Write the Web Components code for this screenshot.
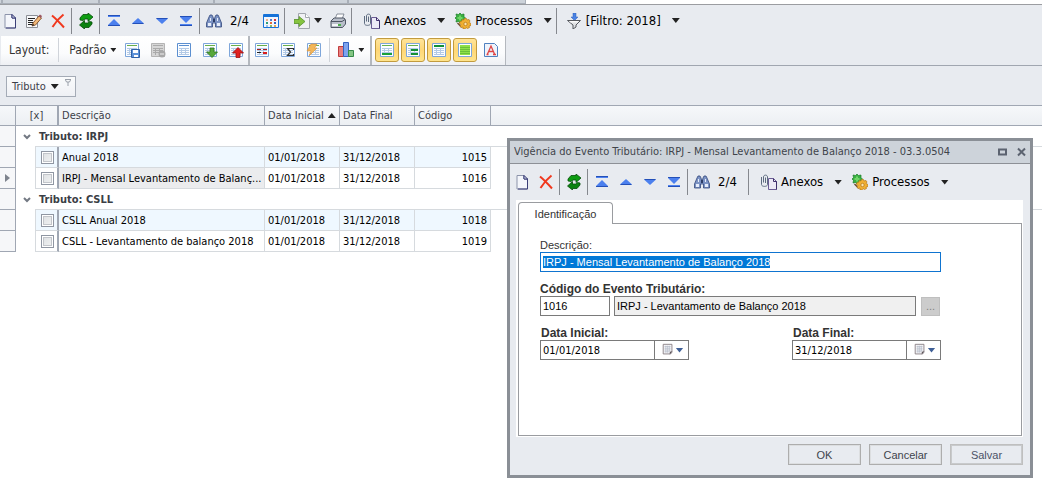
<!DOCTYPE html>
<html lang="pt-BR">
<head>
<meta charset="utf-8">
<title>Vigência do Evento Tributário</title>
<style>
  body {
    margin: 0;
    background: #fff;
    color: #1c1c1c;
    font: 11px/14px "DejaVu Sans Condensed", Tahoma, sans-serif;
  }
</style>
</head>
<body>
<event-page></event-page>

<script>
const ICONS = {
  new: `<path d="M3 1.500h7l3.500 3.500v10H3z" fill="#f4f6fb" stroke="#8c93aa"/><path d="M10 1.500v3.500h3.500v10H4" fill="none" stroke="#3b3f78"/><path d="M10 1.500l3.500 3.500H10z" fill="#dfe4f2" stroke="#3b3f78"/>`,
  edit: `<path d="M.5 2.500h11v12H.5z" fill="#f7f8fa" stroke="#8c8f96"/><path d="M2 5.500h7M2 7.500h5M2 9.500h5M2 11.500h4" stroke="#222"/><path d="M6 13l1-3 6-7 2.500 2-6 7z" fill="#f2b878" stroke="#8a5a34"/><path d="M6 13l.8-2.200 1.500 1.300z" fill="#222"/><path d="M12.500 3l1.500-1.500 2 1.500-1 2z" fill="#9a5560"/>`,
  remove: `<path d="M2 2.500C5 5 10 10 14 14.500M13.500 1.500C9 5 5 10 2.500 14" fill="none" stroke="#f0381e" stroke-width="2"/>`,
  refresh: `<path d="M2 7V5l3-3.500h5V0l5 4-5 4.500V6H7L5 7.500z" fill="#0d9c12" stroke="#064e0a" stroke-width=".8"/><path d="M14 9v2l-3 3.500H6.500V16L1.500 12l5-4.500V10H9.500l2-1.500z" fill="#0b8210" stroke="#064e0a" stroke-width=".8"/>`,
  first: `<path d="M2 2h12v2H2z" fill="#4f83f0"/><path d="M2 2h12v1H2z" fill="#2450b8"/><path d="M8 6l6 6v1H2v-1z" fill="#4c80ee"/><path d="M2 12h12v1H2z" fill="#2450b8"/>`,
  up: `<path d="M8 5l5.500 5v1h-11v-1z" fill="#4c80ee"/><path d="M2.500 10h11v1h-11z" fill="#2450b8"/>`,
  down: `<path d="M8 11L2.500 6V5h11v1z" fill="#4c80ee"/><path d="M2.500 5h11v1h-11z" fill="#2450b8"/>`,
  last: `<path d="M8 10L2 4V3h12v1z" fill="#4c80ee"/><path d="M2 3h12v1H2z" fill="#2450b8"/><path d="M2 11h12v2H2z" fill="#4f83f0"/><path d="M2 12h12v1H2z" fill="#2450b8"/>`,
  find: `<path d="M3 4l1-2h2l1 2 .5 2h1L9 4l1-2h2l1 2 2.500 6v4h-6v-4h-3v4h-6v-4z" fill="#7c93c4" stroke="#32477c" stroke-width=".8"/><path d="M2 10h3v3H2zM11 10h3v3h-3zM4 5h1v3H4zM11 5h1v3h-1z" fill="#e6edfb"/><path d="M7 6h2v3H7z" fill="#2c3c66"/>`,
  calendar: `<path d="M.5 1.500h15v13H.5z" fill="#f3f6fc" stroke="#1672d8"/><path d="M1 1h14v3H1z" fill="#1672d8"/><path d="M3 6h2v2H3z" fill="#efb08a"/><path d="M7 6h2v2H7z" fill="#4b7ed0"/><path d="M11 6h2v2h-2z" fill="#d8363c"/><path d="M3 9h2v2H3z" fill="#2f9e78"/><path d="M7 9h2v2H7z" fill="#e66a32"/><path d="M11 9h2v2h-2z" fill="#3264c0"/><path d="M3 12h2v2H3z" fill="#9bc0e8"/><path d="M7 12h2v2H7z" fill="#85b96c"/><path d="M11 12h2v2h-2z" fill="#e8a44c"/>`,
  export: `<path d="M4.500.500h7l4 4v11h-11z" fill="#f0f1f4" stroke="#a2a6ae"/><path d="M11.500.500v4h4" fill="#fff" stroke="#a2a6ae"/><path d="M0 6.500h5v-3L11 8.500 5 13.500v-3H0z" fill="#86c440" stroke="#55912a" stroke-width=".8"/>`,
  print: `<path d="M5 6l2-5h7l-2 5z" fill="#fdfdfe" stroke="#6f7684" stroke-width=".8"/><path d="M1 8l3-3h10l1.500 2v4l-3 3.500H1z" fill="#b9bfca" stroke="#4f5664"/><path d="M1 8.500h11l3-2" fill="none" stroke="#4f5664"/><path d="M2 11h9v2H2z" fill="#f4f6f8"/><path d="M8 11h3v2H8z" fill="#4cae4c"/>`,
  clip: `<path d="M7.500 4.500h5l3 3v8h-8z" fill="#eceaf6" stroke="#6b5d94"/><path d="M12.500 4.500v3h3v8" fill="none" stroke="#3e2f6c"/><path d="M4.500 3.500V9M2.500 8.500V3c0-2.500 4-2.500 4 0v7.500c0 2.500-6 2.500-6 0V3" fill="none" stroke="#5e6c80"/>`,
  gears: `<path d="M5 0l1.500 1.500L9 1v2.500L10.500 5 9 6.500V9L6.500 8.500 5 10 3.500 8.500 1 9l.5-2.500L0 5l1.500-1.500L1 1l2.500.500z" fill="#38b040" stroke="#1c7c2a" stroke-width=".7"/><path d="M4 2.500h2V4h1.500v2H6v1.500H4V6H2.500V4H4z" fill="#70d468"/><path d="M2.500 10l4 4" stroke="#6b4a30" stroke-width="1.500"/><path d="M9.500 5.500h2l.5 1.500 2-.5 1 1.500-1 1.500 2 1v2l-2 .5.5 1.500-2 1-1.500-1-1 1.500h-2L8 14l-2 .5L5 13l1-1.500-1.500-1 .5-2 2-.5V6.500l2 .500z" fill="#f0b032" stroke="#b87818" stroke-width=".7"/><circle cx="10.500" cy="11" r="1.700" fill="#fbe6b0" stroke="#b87818" stroke-width=".8"/>`,
  filter: `<path d="M7 0h3v4h2L8.500 7.500 5 4h2z" fill="#4a82e4" stroke="#2d5cb8" stroke-width=".5"/><path d="M1.500 7.500h13L10 12v2l-3 2v-4z" fill="#dfe1e4" stroke="#55585e"/><path d="M3 8h10l-1.500 1.500h-7z" fill="#fafafa"/>`,
  pin: `<path d="M1 1.500h6M1.500 2l1 2h3l1-2M4 4v4" fill="none" stroke="#9aa0aa"/>`,
  note: `<path d="M2.500 1.500h10v9l-1.500 2H2.500z" fill="#f6f6f8" stroke="#857b80"/><path d="M4 4h7M4 6h7M4 8h7M4 10h5M5.500 3v8M7.500 3v8M9.500 3v7" fill="none" stroke="#b6bdca" stroke-width=".8"/><path d="M13 9.500l-3 3.500v-3z" fill="#5c5458"/>`
};

// small table sheet shared by the layout toolbar icons
const sheet = (extra, line = "#7ea6da", head = "#69b04c") =>
  `<path d="M1.500 1.500h13v13h-13z" fill="#fbfdff" stroke="${line}"/><path d="M3 3h10v1H3z" fill="${head}"/><path d="M3 6.500h10M3 8.500h10M3 10.500h10M3 12.500h10M5.500 6v7M9.500 6v7" stroke="#b3cae6" fill="none"/>${extra}`;

Object.assign(ICONS, {
  sheet: sheet("", "#5b8fd0", "#5b8fd0"),
  sheetSave: sheet(`<path d="M7.500 7.500h8v8h-8z" fill="#5d92d8" stroke="#2f62a8"/><path d="M9 8h5v3H9zM10 13h4v2h-4z" fill="#fff"/>`),
  sheetOff: `<path d="M1.500 1.500h13v13h-13z" fill="#d6d6d6" stroke="#b4b4b4"/><path d="M3 3.500h10M3 6.500h10M3 8.500h10M3 10.500h10M5.500 6v7M9.500 6v7" stroke="#aaa" fill="none"/><circle cx="12" cy="12" r="3.500" fill="#a8a8a8"/><path d="M10 12h4" stroke="#eee"/>`,
  sheetDown: sheet(`<path d="M8 6h4v4h3.500L10 15.500 4.500 10H8z" fill="#58a83a" stroke="#2f7422" stroke-width=".8"/>`),
  sheetUp: sheet(`<path d="M8 15.500h4V11h3.500L10 5.500 4.500 11H8z" fill="#e02020" stroke="#9c1010" stroke-width=".8"/>`),
  sheetRows: sheet(`<path d="M3 7h4v1H3zM9 7h4v1H9z" fill="#a02020"/><path d="M3 10h4v1H3z" fill="#222"/><path d="M9 10h4v2H9z" fill="#d81e1e"/>`),
  sheetSum: sheet(`<path d="M13.500 8V6.500h-6L10.500 10l-3 3.500h6V12" fill="none" stroke="#303030" stroke-width="1.200"/>`),
  sheetBolt: sheet(`<path d="M5 2h6L8.500 6H11l-8 8 2-5H1z" fill="#f3b75a" stroke="#d8923a" stroke-width=".6"/>`),
  chart: `<path d="M.5 4.500h5v10h-5z" fill="#e88080" stroke="#c03c3c"/><path d="M5.500.500h5v14h-5z" fill="#7ea4ee" stroke="#3462c0"/><path d="M10.500 8.500h5v6h-5z" fill="#84c684" stroke="#348a48"/>`,
  sheetFoot: sheet(`<path d="M3 11h10v2H3z" fill="#18a03a"/>`),
  sheetGroup: sheet(`<path d="M6 7h7v2H6zM6 11h7v2H6z" fill="#129034"/>`),
  sheetHead: sheet(`<path d="M3 3h10v2H3z" fill="#129034"/>`),
  sheetFill: `<path d="M1.500 1.500h13v13h-13z" fill="#fff" stroke="#7ea6da"/><path d="M3 3h10v10H3z" fill="#90e048"/><path d="M3 5.500h10M3 7.500h10M3 9.500h10M3 11.500h10" stroke="#6cc03a"/>`,
  letter: `<path d="M1.500 1.500h10l3 3v10h-13z" fill="#eef3fb" stroke="#4f81c0"/><path d="M4.500 12L8 4l3.500 8M6 9.500h4M3.500 12.500h2M10 12.500h3" fill="none" stroke="#e04444" stroke-width="1.300"/>`
});

function define(name, css, html, setup) {
  const template = document.createElement("template");
  template.innerHTML = `<style>*{box-sizing:border-box}${css}</style>${html}`;
  customElements.define(name, class extends HTMLElement {
    constructor() {
      super();
      this.attachShadow({ mode: "open" }).append(template.content.cloneNode(true));
    }
    connectedCallback() {
      if (setup) setup(this, this.shadowRoot);
    }
  });
}

define("ui-icon", `
  :host { display: block; flex: none; width: 16px; height: 16px; }
  :host([small]) { width: 8px; height: 8px; }
  svg { display: block; width: 100%; height: 100%; }
`, `<svg aria-hidden="true"></svg>`, (host, root) => {
  const size = host.hasAttribute("small") ? 8 : 16;
  const svg = root.querySelector("svg");
  svg.setAttribute("viewBox", `0 0 ${size} ${size}`);
  svg.innerHTML = ICONS[host.getAttribute("name")] || "";
});

define("drop-arrow", `
  :host { display: block; flex: none; width: 8px; height: 5px; background: #222; clip-path: polygon(0 0, 100% 0, 50% 100%); }
  :host([tiny]) { width: 6px; height: 4px; }
`, ``);

define("tool-button", `
  :host { display: block; flex: none; }
  button {
    display: flex; align-items: center; justify-content: center; gap: 4px;
    min-width: 24px; height: 24px; padding: 0 4px; margin: 0;
    border: 0; border-radius: 3px; background: none; color: inherit; font: inherit; white-space: nowrap;
  }
  :host([pressed]) button { padding: 0 3px; border: 1px solid #c29b3e; background: linear-gradient(#ffe49a, #ffd776 50%, #ffe48c); }
`, `<button type="button"><ui-icon></ui-icon><slot></slot></button>`, (host, root) => {
  const icon = document.createElement("ui-icon");
  icon.setAttribute("name", host.getAttribute("icon"));
  root.querySelector("ui-icon").replaceWith(icon);
  root.querySelector("button").setAttribute("aria-label", host.textContent.trim() || host.getAttribute("label"));
  if (host.hasAttribute("pressed")) root.querySelector("button").setAttribute("aria-pressed", "true");
});

define("tool-separator", `
  :host { display: block; flex: none; width: 1px; height: 26px; margin: 0 2px 0 1px; background: #85888e; }
  :host([soft]) { height: 24px; background: #d0d4da; }
`, ``);

define("tab-strip", `
  :host { display: flex; height: 5px; border-bottom: 1px solid #9b9da1; background: #fff; }
  span { background: #cdd3da; border-right: 2px solid #a9afb8; border-bottom: 1px solid #a9afb8; }
  .lead { flex: 0 0 3px; } .a { flex: 0 0 97px; } .b { flex: 0 0 115px; } .c { flex: 0 0 134px; } .d { flex: 0 0 177px; border-right-width: 1px; }
`, `<span class="lead"></span><span class="a"></span><span class="b"></span><span class="c"></span><span class="d"></span>`);

define("record-toolbar", `
  :host { display: flex; align-items: center; height: 31px; margin-left: -2px; color: #000; font-size: 13px; }
  .count { width: 33px; padding-left: 4px; }
  .menu { display: flex; align-items: center; gap: 7px; padding: 0 3px; }
  .count ~ .export, .attach { margin-left: 3px; }
  :host([compact]) { margin-left: 0; }
  :host([compact]) .full { display: none; }
`, `
  <tool-button icon="new" label="Novo"></tool-button>
  <tool-button class="full" icon="edit" label="Editar"></tool-button>
  <tool-button icon="remove" label="Excluir"></tool-button>
  <tool-separator></tool-separator>
  <tool-button icon="refresh" label="Atualizar"></tool-button>
  <tool-separator></tool-separator>
  <tool-button icon="first" label="Primeiro"></tool-button>
  <tool-button icon="up" label="Anterior"></tool-button>
  <tool-button icon="down" label="Próximo"></tool-button>
  <tool-button icon="last" label="Último"></tool-button>
  <tool-separator></tool-separator>
  <tool-button icon="find" label="Localizar"></tool-button>
  <span class="count">2/4</span>
  <tool-button class="full" icon="calendar" label="Calendário"></tool-button>
  <tool-separator></tool-separator>
  <tool-button class="full export" icon="export" label="Exportar"><drop-arrow></drop-arrow></tool-button>
  <tool-button class="full" icon="print" label="Imprimir"></tool-button>
  <tool-separator class="full"></tool-separator>
  <div class="menu attach"><tool-button icon="clip">Anexos</tool-button><drop-arrow></drop-arrow></div>
  <div class="menu"><tool-button icon="gears">Processos</tool-button><drop-arrow></drop-arrow></div>
  <tool-separator class="full"></tool-separator>
  <div class="menu full"><tool-button icon="filter">[Filtro: 2018]</tool-button><drop-arrow></drop-arrow></div>
`);

define("layout-toolbar", `
  :host { display: flex; height: 30px; padding-left: 1px; border-bottom: 1px solid #a0a6b0; color: #333; }
  .band { display: flex; align-items: center; gap: 2px; height: 29px; padding: 0 0 1px; border-right: 2px solid #b4b8be; background: linear-gradient(#fff, #fbfcfd 60%, #eef0f4); }
  .band + .band { padding-right: 2px; }
  .band:last-child { padding-left: 3px; border-right-width: 1px; }
  label { padding: 0 6px 0 8px; font-size: 12px; }
  select { appearance: none; margin: 0; padding: 0; border: 0; background: none; color: inherit; font: inherit; font-size: 12px; }
  .pick { display: flex; align-items: center; gap: 3px; padding: 0 2px 0 6px; }
`, `
  <div class="band">
    <label for="layout">Layout:</label>
    <tool-separator soft></tool-separator>
    <div class="pick"><select id="layout"><option>Padrão</option></select><drop-arrow tiny></drop-arrow></div>
    <tool-button icon="sheetSave" label="Salvar layout"></tool-button>
    <tool-button icon="sheetOff" label="Remover layout"></tool-button>
    <tool-button icon="sheet" label="Layout original"></tool-button>
    <tool-button icon="sheetDown" label="Importar layout"></tool-button>
    <tool-button icon="sheetUp" label="Exportar layout"></tool-button>
  </div>
  <div class="band">
    <tool-button icon="sheetRows" label="Colunas"></tool-button>
    <tool-button icon="sheetSum" label="Totais"></tool-button>
    <tool-button icon="sheetBolt" label="Formatação"></tool-button>
    <tool-separator soft></tool-separator>
    <tool-button icon="chart" label="Gráfico"><drop-arrow tiny></drop-arrow></tool-button>
  </div>
  <div class="band">
    <tool-button pressed icon="sheetFoot" label="Rodapé"></tool-button>
    <tool-button pressed icon="sheetGroup" label="Rodapé do grupo"></tool-button>
    <tool-button pressed icon="sheetHead" label="Painel de grupo"></tool-button>
    <tool-button pressed icon="sheetFill" label="Cores alternadas"></tool-button>
    <tool-button icon="letter" label="Fonte"></tool-button>
  </div>
`);

define("group-panel", `
  :host { display: flex; padding: 10px 6px 8px; }
  button { display: flex; align-items: center; gap: 5px; height: 21px; margin: 0; padding: 0 3px 0 5px; border: 1px solid #a4abb6; background: linear-gradient(#fafbfc, #eff1f5); color: #3c4048; font: inherit; }
  ui-icon { align-self: flex-start; margin-top: 1px; }
`, `<button type="button"><slot></slot><drop-arrow></drop-arrow><ui-icon small name="pin"></ui-icon></button>`);

const GROUPS = [
  { name: "IRPJ", rows: [
    ["Anual 2018", "01/01/2018", "31/12/2018", "1015"],
    ["IRPJ - Mensal Levantamento de Balanç...", "01/01/2018", "31/12/2018", "1016"]
  ] },
  { name: "CSLL", rows: [
    ["CSLL Anual 2018", "01/01/2018", "31/12/2018", "1018"],
    ["CSLL - Levantamento de balanço 2018", "01/01/2018", "31/12/2018", "1019"]
  ] }
];

define("event-grid", `
  :host { display: block; background: #fff; color: #000; }
  table { width: 100%; table-layout: fixed; border-collapse: separate; border-spacing: 0; }
  th, td { height: 21px; padding: 0 3px; border: 0 solid #d6dade; border-width: 0 1px 1px 0; text-align: left; font-weight: normal; white-space: nowrap; overflow: hidden; }
  td { padding: 1px 3px 0; }
  th { border-color: #a0a7b3; border-top-width: 1px; background: linear-gradient(#f6f8fa, #eceff3); color: #3c4048; }
  th:last-child { border-right-width: 0; }
  th.mark { text-align: center; border-right-width: 2px; }
  .lead { background: #f6f7f9; border-color: #a0a7b3; padding: 0; }
  .indent { border-bottom-width: 0; padding: 0; }
  .check { border-right: 2px solid #a0a7b3; padding: 0; }
  .text { padding-right: 0; }
  .num { text-align: right; }
  .rest { border: 0; }
  .alt { background: #eff8ff; }
  .here { background: #ebecee; }
  .group { border-width: 0 0 1px; border-image: linear-gradient(90deg, #fff 20px, #d6dade 20px) 1; color: #3a3e45; font-weight: bold; padding: 1px 7px 0; }
  .group div { display: flex; align-items: center; gap: 8px; }
  .group svg { flex: none; }
  th div { display: flex; align-items: center; gap: 4px; }
  input { display: block; appearance: none; width: 13px; height: 13px; margin: 0 0 0 5px; border: 1px solid #8f96a2; background: linear-gradient(135deg, #dcdfe2, #f2f3f3); box-shadow: inset 0 0 0 1px #fff, inset 0 0 0 2px #c2c5ca; }
  .up { width: 8px; height: 5px; background: #222; clip-path: polygon(50% 0, 100% 100%, 0 100%); }
  .now { display: block; width: 5px; height: 8px; margin: 0 auto; background: #7d838d; clip-path: polygon(0 0, 100% 50%, 0 100%); }
`, `
  <table>
    <colgroup>
      <col style="width:16px"><col style="width:20px"><col style="width:23px"><col style="width:206px">
      <col style="width:75px"><col style="width:75px"><col style="width:76px"><col>
    </colgroup>
    <thead><tr>
      <th></th><th class="mark" colspan="2">[x]</th><th>Descrição</th>
      <th><div>Data Inicial<span class="up"></span></div></th><th>Data Final</th><th>Código</th><th></th>
    </tr></thead>
    <tbody></tbody>
  </table>
`, (host, root) => {
  const body = root.querySelector("tbody");
  GROUPS.forEach(group => {
    body.insertAdjacentHTML("beforeend", `<tr><td class="lead"></td><td class="group" colspan="7"><div>
      <svg width="8" height="6" aria-hidden="true"><path d="M1 1l3 3 3-3" fill="none" stroke="#737983" stroke-width="2"/></svg>Tributo: ${group.name}</div></td></tr>`);
    group.rows.forEach(([text, from, to, code], i) => {
      const current = code === "1016";
      const alt = i === 0 ? "alt" : "";
      body.insertAdjacentHTML("beforeend", `<tr>
        <td class="lead">${current ? '<span class="now"></span>' : ""}</td><td class="indent"></td>
        <td class="check ${alt}"><input type="checkbox" aria-label="${text}"></td>
        <td class="text ${current ? "here" : alt}">${text}</td><td class="${alt}">${from}</td>
        <td class="${alt}">${to}</td><td class="num ${alt}">${code}</td><td class="rest"></td></tr>`);
    });
  });
});

define("date-field", `
  :host { display: block; }
  label { display: block; height: 14px; padding-left: 1px; font-size: 12px; font-weight: bold; }
  .box { display: flex; width: 149px; height: 20px; border: 1px solid #7a7a7a; }
  input { flex: 1; min-width: 0; margin: 0; padding: 0 2px; border: 0; background: #fff; color: #000; font: 11px "DejaVu Sans Condensed", Tahoma, sans-serif; }
  button { display: flex; align-items: center; justify-content: center; width: 34px; margin: 0; padding: 0; border: 0; border-left: 1px solid #7a7a7a; background: #fff; }
  ui-icon { height: 14px; }
  drop-arrow { background: #3f5f96; }
`, `<label for="date"></label><div class="box"><input id="date"><button type="button" aria-label="Abrir calendário"><ui-icon name="note"></ui-icon><drop-arrow></drop-arrow></button></div>`, (host, root) => {
  root.querySelector("label").textContent = host.getAttribute("label");
  root.querySelector("input").value = host.getAttribute("value");
});

define("event-form", `
  :host { display: block; padding: 2px 1px 1px 2px; background: #fff; font: 11px/14px "Liberation Sans", Arial, sans-serif; color: #333; }
  .tab { position: relative; display: block; width: 95px; height: 22px; margin: 0 0 -1px; padding: 0; border: 1px solid #9a9ca0; border-bottom: 0; border-radius: 4px 4px 0 0; background: #fff; color: #333; font: inherit; }
  .body { display: flex; flex-direction: column; gap: 10px; height: 213px; padding: 14px 80px 0 21px; border: 1px solid #9a9ca0; }
  label { display: block; height: 14px; }
  b { display: block; font-size: 12px; }
  input { height: 20px; margin: 0; padding: 0 2px; border: 1px solid #7a7a7a; border-radius: 0; background: #fff; color: #000; font: inherit; outline: 0; }
  #description { display: block; width: 100%; border-color: #0f74d0; }
  #description::selection { background: #0078d7; color: #fff; }
  .line { display: flex; align-items: center; gap: 4px; }
  #code { width: 70px; }
  #event { flex: 1; min-width: 0; background: #f0f0f0; }
  .line button { width: 19px; height: 19px; margin: 0 1px; padding: 0; border: 1px solid #bfbfbf; background: #ccc; color: #838383; font: inherit; }
  .dates { display: flex; justify-content: space-between; }
`, `
  <button class="tab" type="button" role="tab" aria-selected="true">Identificação</button>
  <div class="body">
    <div><label for="description">Descrição:</label><input id="description" value="IRPJ - Mensal Levantamento de Balanço 2018"></div>
    <div>
      <label for="code"><b>Código do Evento Tributário:</b></label>
      <div class="line"><input id="code" value="1016"><input id="event" value="IRPJ - Levantamento de Balanço 2018" readonly aria-label="Evento"><button type="button" disabled>...</button></div>
    </div>
    <div class="dates"><date-field label="Data Inicial:" value="01/01/2018"></date-field><date-field label="Data Final:" value="31/12/2018"></date-field></div>
  </div>
`, (host, root) => {
  const description = root.querySelector("#description");
  description.focus();
  description.select();
});

define("event-window", `
  :host { display: block; border: 3px solid #8a8f96; background: #e8ebf0; }
  header { display: flex; align-items: center; height: 23px; padding: 0 4px; border-bottom: 1px solid #8d9096; background: #cdd3da; color: #40444a; }
  h1 { flex: 1; margin: 0; font: inherit; white-space: nowrap; overflow: hidden; }
  header button { display: block; width: 9px; height: 10px; margin: 0 0 0 10px; padding: 0; border: 0; background: none; }
  header svg { display: block; }
  record-toolbar { height: 36px; }
  event-form { margin: 0 7px 0 6px; }
  footer { display: flex; justify-content: flex-end; gap: 8px; padding: 7px 7px 10px; }
  footer button { width: 73px; height: 21px; margin: 0; padding: 0; border: 1px solid #adadad; background: #e8ebf0; box-shadow: inset 0 0 0 1px #dcdee0; color: #40444c; font: 11px "Liberation Sans", Arial, sans-serif; }
  footer button:last-child { border-color: #bfbfbf; box-shadow: inset 0 0 0 1px #c8cacc; color: #4b5368; }
`, `
  <header>
    <h1><slot name="title"></slot></h1>
    <button type="button" aria-label="Maximizar"><svg width="9" height="10"><path d="M1 2.500h7v5H1z" fill="none" stroke="#5c6370" stroke-width="2"/></svg></button>
    <button type="button" aria-label="Fechar"><svg width="9" height="10"><path d="M1 1.500l7 7M8 1.500l-7 7" stroke="#5c6370" stroke-width="2"/></svg></button>
  </header>
  <record-toolbar compact></record-toolbar>
  <event-form></event-form>
  <footer><button type="button">OK</button><button type="button">Cancelar</button><button type="button">Salvar</button></footer>
`);

define("event-page", `
  :host { display: block; position: relative; min-height: 100vh; overflow: hidden; }
  .chrome { background: #e8ebf0; }
  event-window { position: absolute; top: 138px; right: 9px; width: 526px; }
`, `
  <div class="chrome">
    <tab-strip></tab-strip>
    <record-toolbar></record-toolbar>
    <layout-toolbar></layout-toolbar>
    <group-panel>Tributo</group-panel>
  </div>
  <event-grid></event-grid>
  <event-window><span slot="title">Vigência do Evento Tributário: IRPJ - Mensal Levantamento de Balanço 2018 - 03.3.0504</span></event-window>
`);
</script>
</body>
</html>
